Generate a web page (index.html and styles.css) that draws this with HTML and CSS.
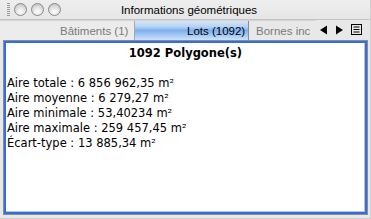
FILE: index.html
```html
<!DOCTYPE html>
<html lang="fr">
<head>
<meta charset="utf-8">
<title>Informations géométriques</title>
<link rel="stylesheet" href="styles.css">
</head>
<body>
<div class="window">
  <div class="titlebar">
    <div class="grip"></div>
    <div class="lights">
      <span class="light"></span><span class="light"></span><span class="light"></span>
    </div>
    <div class="title">Informations géométriques</div>
  </div>
  <div class="tabbar">
    <div class="tabs">
      <div class="tab first">Bâtiments (1)</div>
      <div class="tab active">Lots (1092)</div>
      <div class="tab last"><span>Bornes incendie</span></div>
    </div>
    <div class="controls">
      <svg width="9" height="10" viewBox="0 0 9 10"><path d="M8 0.5 L1 5 L8 9.5 Z" fill="#000"/></svg>
      <svg width="9" height="10" viewBox="0 0 9 10"><path d="M1 0.5 L8 5 L1 9.5 Z" fill="#000"/></svg>
      <svg width="11" height="11" viewBox="0 0 11 11"><rect x="0.5" y="0.5" width="10" height="10" fill="none" stroke="#000"/><rect x="2.5" y="2.5" width="6" height="1" fill="#000"/><rect x="2.5" y="5" width="6" height="1" fill="#000"/><rect x="2.5" y="7.5" width="6" height="1" fill="#000"/></svg>
    </div>
  </div>
  <div class="panel">
    <div class="content">
      <div class="heading">1092 Polygone(s)</div>
      <div class="blank">&nbsp;</div>
      <div class="line">Aire totale : 6 856 962,35 m²</div>
      <div class="line">Aire moyenne : 6 279,27 m²</div>
      <div class="line">Aire minimale : 53,40234 m²</div>
      <div class="line">Aire maximale : 259 457,45 m²</div>
      <div class="line">Écart-type : 13 885,34 m²</div>
    </div>
  </div>
</div>
</body>
</html>
```

FILE: styles.css
```css
html, body {
  margin: 0;
  padding: 0;
}
body {
  width: 371px;
  height: 219px;
  overflow: hidden;
  background: #e4e4e4;
}
.window {
  width: 371px;
  height: 219px;
  box-sizing: border-box;
  display: flex;
  flex-direction: column;
  background: #e8e8e8;
  border-right: 1px solid #cfcfcf;
  border-bottom: 1px solid #cfcfcf;
}
.titlebar {
  height: 20px;
  box-sizing: border-box;
  display: flex;
  align-items: center;
  position: relative;
  background: linear-gradient(#eeeeee, #e6e6e6);
  border-bottom: 1px solid #c4c4c4;
}
.grip {
  width: 3px;
  height: 13px;
  margin-left: 7px;
  background: repeating-linear-gradient(#9a9a9a 0 1px, transparent 1px 2px);
}
.lights {
  display: flex;
  gap: 4px;
  margin-left: 4px;
}
.light {
  width: 13px;
  height: 13px;
  box-sizing: border-box;
  border-radius: 50%;
  border: 1px solid #8a8a8a;
  background: radial-gradient(circle at 50% 70%, #ffffff 0%, #e4e4e4 45%, #b4b4b4 100%);
}
.title {
  position: absolute;
  left: 0;
  right: 0;
  top: 3px;
  text-align: center;
  font-family: "Liberation Sans", Arial, sans-serif;
  font-size: 11.5px;
  line-height: 14px;
  color: #000;
  padding-left: 8px;
}
.tabbar {
  height: 20px;
  display: flex;
  align-items: stretch;
  font-family: "Liberation Sans", Arial, sans-serif;
  font-size: 11.5px;
}
.tabs {
  display: flex;
  flex: none;
  width: 316px;
  overflow: hidden;
  border-top: 1px solid #d4d4d4;
  box-sizing: border-box;
}
.tab {
  display: flex;
  align-items: center;
  color: #7a7a7a;
  box-sizing: border-box;
  white-space: nowrap;
}
.tab.first {
  padding-left: 60px;
  width: 135px;
  border-right: 1px solid #a8a8a8;
  background: #ececec;
}
.tab.active {
  width: 114px;
  padding-left: 52px;
  color: #000;
  border-right: 1px solid #8c8c8c;
  background: linear-gradient(#d6e6f8 0%, #b6d2f4 30%, #7fb0ee 50%, #8fbcf2 62%, #cfe2fa 100%);
}
.tab.last {
  flex: none;
  width: 67px;
  padding-left: 7px;
  overflow: hidden;
}
.tab.last span {
  display: block;
  width: 54px;
  overflow: hidden;
}
.controls {
  display: flex;
  align-items: center;
  gap: 7px;
  padding-left: 3px;
  padding-bottom: 1px;
}
.panel {
  flex: 1;
  margin: 0 2px 3px 3px;
  border: 1px solid #8c8c8c;
  display: flex;
}
.content {
  flex: 1;
  border: 2px solid #2f6ee6;
  background: #fff;
  box-shadow: inset -1px -1px 0 #c4c4c4;
  font-family: "DejaVu Sans", Verdana, sans-serif;
  font-size: 11.5px;
  line-height: 15px;
  color: #000;
  padding: 3px 2px 0 1px;
}
.heading {
  font-weight: bold;
  text-align: center;
  padding-left: 1px;
}
```
